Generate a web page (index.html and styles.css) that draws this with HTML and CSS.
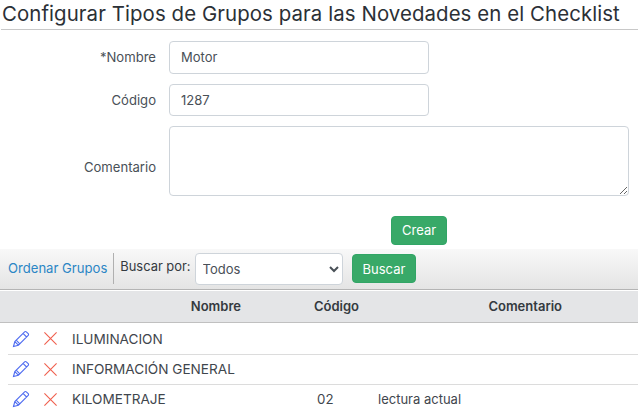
FILE: index.html
```html
<!DOCTYPE html>
<html lang="es">
<head>
  <meta charset="UTF-8" />
  <title>Configurar Tipos de Grupos</title>
  <link rel="stylesheet" href="styles.css">
</head>
<body>
  <h1 class="title">Configurar Tipos de Grupos para las Novedades en el Checklist</h1>

  <form class="form">
    <label class="form-label">*Nombre</label>
    <input class="form-input short" type="text" value="Motor">
    <label class="form-label">Código</label>
    <input class="form-input short" type="text" value="1287">
    <label class="form-label area-label">Comentario</label>
    <textarea class="form-input area"></textarea>
  </form>
  <div class="form-actions">
    <button class="btn" type="button">Crear</button>
  </div>

  <div class="toolbar">
    <a class="toolbar-link" href="#">Ordenar Grupos</a>
    <span class="toolbar-label">Buscar por:</span>
    <select class="toolbar-select">
      <option>Todos</option>
    </select>
    <button class="btn" type="button">Buscar</button>
  </div>

  <div class="table-head">
    <div class="col-name">Nombre</div>
    <div class="col-code">Código</div>
    <div class="col-comment">Comentario</div>
  </div>

  <div class="table-row first">
    <svg class="icon" viewBox="0 0 18 18"><path d="M1.5 16.5 2.8 11.6 12.6 1.8a1.2 1.2 0 0 1 1.7 0l1.9 1.9a1.2 1.2 0 0 1 0 1.7L6.4 15.2ZM2.8 11.6l3.6 3.6M11 3.4l3.6 3.6M4.2 10.2l3.6 3.6"/></svg>
    <svg class="icon remove" viewBox="0 0 16 16"><path d="M1.5 1.5 14.5 14.5M14.5 1.5 1.5 14.5"/></svg>
    <div class="cell-name">ILUMINACION</div>
  </div>
  <div class="table-row">
    <svg class="icon" viewBox="0 0 18 18"><path d="M1.5 16.5 2.8 11.6 12.6 1.8a1.2 1.2 0 0 1 1.7 0l1.9 1.9a1.2 1.2 0 0 1 0 1.7L6.4 15.2ZM2.8 11.6l3.6 3.6M11 3.4l3.6 3.6M4.2 10.2l3.6 3.6"/></svg>
    <svg class="icon remove" viewBox="0 0 16 16"><path d="M1.5 1.5 14.5 14.5M14.5 1.5 1.5 14.5"/></svg>
    <div class="cell-name">INFORMACIÓN GENERAL</div>
  </div>
  <div class="table-row">
    <svg class="icon" viewBox="0 0 18 18"><path d="M1.5 16.5 2.8 11.6 12.6 1.8a1.2 1.2 0 0 1 1.7 0l1.9 1.9a1.2 1.2 0 0 1 0 1.7L6.4 15.2ZM2.8 11.6l3.6 3.6M11 3.4l3.6 3.6M4.2 10.2l3.6 3.6"/></svg>
    <svg class="icon remove" viewBox="0 0 16 16"><path d="M1.5 1.5 14.5 14.5M14.5 1.5 1.5 14.5"/></svg>
    <div class="cell-name">KILOMETRAJE</div>
    <div class="cell-code">02</div>
    <div class="cell-comment">lectura actual</div>
  </div>
</body>
</html>
```

FILE: styles.css
```css
html, body { height: 412px; overflow: hidden; }
body { margin: 0; background: #fff; color: #343a40; font-family: "Inter", "Open Sans", sans-serif; font-size: 13px; }

.title { margin: 0 0 0 1px; padding: 2px 0 4px 1px; height: 23px; line-height: 23px; font-size: 20.4px; font-weight: 400; letter-spacing: 0.09px; color: #2b3036; border-bottom: 1px solid #c8c8c8; white-space: nowrap; }

.form { display: grid; grid-template-columns: 156px 460px; column-gap: 13px; row-gap: 10px; margin-top: 11px; align-items: center; }
.form-label { text-align: right; color: #495057; font-size: 13.1px; }
.area-label { margin-top: 12px; }
.form-input { box-sizing: border-box; padding: 0 11px; border: 1px solid #ced4da; border-radius: 4px; background: #fff; color: #495057; font: inherit; }
.short { width: 260px; height: 32.5px; }
.area { width: 460px; height: 70px; }

.form-actions { display: flex; padding: 19.5px 0 0 391px; }
.btn { height: 29px; padding: 0 10px; border: 1px solid #31a566; border-radius: 4px; background: #38a968; color: #fff; font: inherit; }

.toolbar { display: flex; align-items: center; height: 40px; margin-top: 4px; background: linear-gradient(#f8f8f8, #e4e4e4); border-bottom: 1px solid #b4b4b4; }
.toolbar-link { padding: 0 6px 0 8px; height: 31px; line-height: 31px; font-size: 13.1px; color: #2b86c5; text-decoration: none; border-right: 1px solid #b0b0b0; }
.toolbar-label { padding: 0 4px 0 6px; margin-bottom: 4px; font-size: 12.9px; }
.toolbar-select { box-sizing: border-box; width: 148px; height: 32px; padding-left: 3px; margin-right: 9px; border: 1px solid #ced4da; border-radius: 4px; background: #fff; color: #495057; font: inherit; }

.table-head { display: flex; align-items: center; height: 31px; margin-top: 1px; background: #e4e5e7; border-bottom: 1px solid #c0c0c0; font-weight: 600; color: #343a40; }
.col-name { width: 241px; text-align: right; }
.col-code { width: 118px; text-align: right; }
.col-comment { width: 203px; text-align: right; }

.table-row { display: flex; align-items: center; height: 29px; margin-left: 8px; border-bottom: 1px solid #dcdcdc; }
.table-row.first { height: 30px; padding-top: 1px; }
.icon { width: 18px; height: 18px; margin-left: 4px; fill: none; stroke: #4f6cf0; stroke-width: 1.1; }
.remove { width: 15px; height: 15px; margin-left: 13px; stroke: #f0604f; stroke-width: 1.2; }
.cell-name { margin-left: 14px; width: 245px; font-size: 13.6px; color: #3f464d; }
.cell-code { width: 61px; font-size: 13.3px; color: #3f464d; }
.cell-comment { font-size: 13px; color: #3f464d; }
```
